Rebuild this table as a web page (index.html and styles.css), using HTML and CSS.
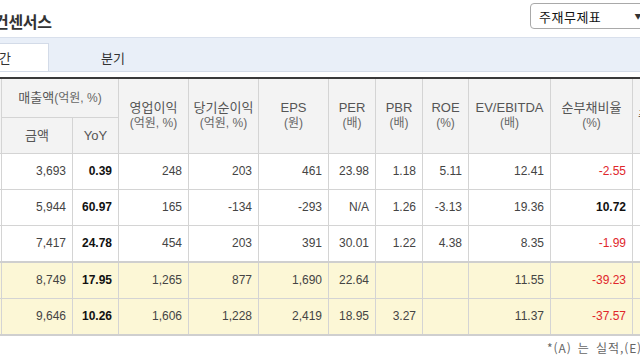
FILE: index.html
```html
<!DOCTYPE html>
<html lang="ko">
<head>
<meta charset="utf-8">
<title>컨센서스</title>
<link rel="stylesheet" href="styles.css">
</head>
<body>
<div class="page">
  <div class="top">
    <h2 class="title">컨센서스</h2>
    <div class="select"><span class="select-text">주재무제표</span><span class="arrow">▼</span></div>
  </div>
  <div class="tabs">
    <div class="tab active">연간</div>
    <div class="tab">분기</div>
  </div>
  <table class="grid">
    <colgroup>
      <col class="c-label"><col class="c71"><col class="c46"><col class="c70"><col class="c70"><col class="c70"><col class="c47"><col class="c47"><col class="c46"><col class="c82"><col class="c82"><col class="c-last">
    </colgroup>
    <thead>
      <tr class="h1">
        <th rowspan="2">IFRS(연결)</th>
        <th colspan="2">매출액<span class="unit-s">(억원, %)</span></th>
        <th rowspan="2">영업이익<br><span class="unit">(억원, %)</span></th>
        <th rowspan="2">당기순이익<br><span class="unit">(억원, %)</span></th>
        <th rowspan="2">EPS<br><span class="unit">(원)</span></th>
        <th rowspan="2">PER<br><span class="unit">(배)</span></th>
        <th rowspan="2">PBR<br><span class="unit">(배)</span></th>
        <th rowspan="2">ROE<br><span class="unit">(%)</span></th>
        <th rowspan="2">EV/EBITDA<br><span class="unit">(배)</span></th>
        <th rowspan="2">순부채비율<br><span class="unit">(%)</span></th>
        <th rowspan="2" class="last">주재무제표</th>
      </tr>
      <tr class="h2">
        <th>금액</th>
        <th>YoY</th>
      </tr>
    </thead>
    <tbody>
      <tr>
        <td class="lbl">2021(A)</td><td>3,693</td><td class="b">0.39</td><td>248</td><td>203</td><td>461</td><td>23.98</td><td>1.18</td><td>5.11</td><td>12.41</td><td class="neg">-2.55</td><td></td>
      </tr>
      <tr>
        <td class="lbl">2022(A)</td><td>5,944</td><td class="b">60.97</td><td>165</td><td>-134</td><td>-293</td><td>N/A</td><td>1.26</td><td>-3.13</td><td>19.36</td><td class="b">10.72</td><td></td>
      </tr>
      <tr>
        <td class="lbl">2023(A)</td><td>7,417</td><td class="b">24.78</td><td>454</td><td>203</td><td>391</td><td>30.01</td><td>1.22</td><td>4.38</td><td>8.35</td><td class="neg">-1.99</td><td></td>
      </tr>
      <tr class="est first-est">
        <td class="lbl">2024(E)</td><td>8,749</td><td class="b">17.95</td><td>1,265</td><td>877</td><td>1,690</td><td>22.64</td><td></td><td></td><td>11.55</td><td class="neg">-39.23</td><td></td>
      </tr>
      <tr class="est">
        <td class="lbl">2025(E)</td><td>9,646</td><td class="b">10.26</td><td>1,606</td><td>1,228</td><td>2,419</td><td>18.95</td><td>3.27</td><td></td><td>11.37</td><td class="neg">-37.57</td><td></td>
      </tr>
    </tbody>
  </table>
  <p class="note">*(A) 는 실적,(E) 는 전망치</p>
</div>
</body>
</html>
```

FILE: styles.css
```css
html, body {
  margin: 0;
  padding: 0;
  overflow: hidden;
  background: #fff;
}
body {
  width: 640px;
  height: 360px;
  font-family: "Liberation Sans", "Noto Sans CJK KR", sans-serif;
  color: #333;
}
.page {
  width: 785px;
  margin-left: -80px;
}
.top {
  display: flex;
  align-items: flex-start;
  height: 37px;
}
.title {
  margin: 11px 0 0 74px;
  font-family: "Noto Sans CJK KR", sans-serif;
  font-size: 16px;
  line-height: 20px;
  font-weight: bold;
  color: #333;
  letter-spacing: -0.3px;
}
.select {
  margin: 3px 59px 0 auto;
  width: 116px;
  height: 26px;
  box-sizing: border-box;
  border: 1px solid #a9a9a9;
  border-radius: 4px;
  display: flex;
  align-items: center;
  padding-left: 8px;
  font-family: "Noto Sans CJK KR", sans-serif;
  font-size: 13px;
  letter-spacing: 0.5px;
  color: #111;
}
.select-text {
  flex: 1;
}
.arrow {
  font-size: 7px;
  margin-right: 3px;
  color: #333;
}
.tabs {
  display: flex;
  align-items: flex-end;
  height: 33px;
  background: #e9eff8;
  border-top: 1px solid #d9e0ec;
  border-bottom: 1px solid #d3dbe8;
}
.tab {
  width: 128px;
  height: 28px;
  display: flex;
  align-items: center;
  justify-content: center;
  font-family: "Noto Sans CJK KR", sans-serif;
  font-size: 13px;
  color: #333;
  box-sizing: border-box;
}
.tab.active {
  width: 100px;
  margin-left: 29px;
  background: #fff;
  border: 1px solid #d3dbe8;
  border-bottom: none;
}
.grid {
  margin-top: 5px;
  border-collapse: collapse;
  table-layout: fixed;
  width: 785px;
  border-top: 2px solid #3a3a3a;
  border-bottom: 2px solid #cfcfcf;
}
.c-label { width: 81px; }
.c71 { width: 71px; }
.c46 { width: 46px; }
.c47 { width: 47px; }
.c70 { width: 70px; }
.c82 { width: 82px; }
.c-last { width: 73px; }
.grid th {
  background: #f3f3f3;
  border: 1px solid #d4d4d4;
  font-family: "Liberation Sans", "Noto Sans CJK KR", sans-serif;
  font-weight: normal;
  font-size: 13px;
  line-height: 15px;
  color: #555;
  padding: 0;
  white-space: nowrap;
  overflow: hidden;
}
.grid th .unit {
  font-size: 12px;
  color: #666;
}
.grid th .unit-s {
  font-size: 12px;
  color: #666;
}
.grid th.last {
  text-align: left;
  padding-left: 5px;
  color: #333;
}
.grid tr.h1 { height: 39px; }
.grid tr.h2 { height: 36px; }
.grid td {
  border: 1px solid #d4d4d4;
  height: 35px;
  padding: 0 6px 0 0;
  text-align: right;
  font-size: 12px;
  color: #444;
  white-space: nowrap;
  overflow: hidden;
}
.grid td.lbl {
  text-align: center;
  padding: 0;
}
.grid td.b {
  font-weight: bold;
  color: #111;
}
.grid td.neg {
  color: #e0262b;
}
.grid tr.first-est td {
  border-top: 2px solid #cfcfcf;
}
.grid tr.est td {
  background: #fcf7d6;
}
.note {
  margin: 4px 0 0;
  padding-left: 627px;
  font-family: "Noto Sans CJK KR", sans-serif;
  font-size: 12px;
  letter-spacing: 0.9px;
  word-spacing: 2px;
  line-height: 16px;
  color: #666;
  white-space: nowrap;
}
```
